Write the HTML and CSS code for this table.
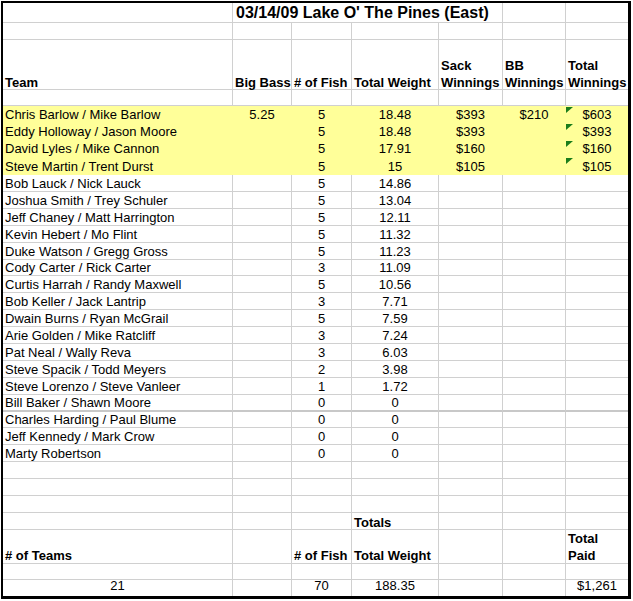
FILE: index.html
```html
<!DOCTYPE html>
<html>
<head>
<meta charset="utf-8">
<link rel="stylesheet" href="styles.css">
</head>
<body>
<div class="sheet">
  <div class="row">
    <div class="c"></div>
    <div class="c title">03/14/09 Lake O' The Pines (East)</div>
    <div class="c"></div>
    <div class="c g"></div>
  </div>
  <div class="row">
    <div class="c"></div><div class="c"></div><div class="c"></div><div class="c"></div><div class="c"></div><div class="c"></div><div class="c g"></div>
  </div>
  <div class="row hrow">
    <div class="c h"><span class="t">Team</span></div>
    <div class="c h"><span class="t">Big Bass</span></div>
    <div class="c h"><span class="t">#&nbsp;of Fish</span></div>
    <div class="c h"><span class="t">Total Weight</span></div>
    <div class="c h"><span class="t">Sack<br>Winnings</span></div>
    <div class="c h"><span class="t">BB<br>Winnings</span></div>
    <div class="c h g"><span class="t">Total<br>Winnings</span></div>
  </div>
  <div class="row">
    <div class="c"></div><div class="c"></div><div class="c"></div><div class="c"></div><div class="c"></div><div class="c"></div><div class="c g"></div>
  </div>

  <div class="row y">
    <div class="c">Chris Barlow / Mike Barlow</div><div class="c m">5.25</div><div class="c m">5</div><div class="c m">18.48</div><div class="c m">$393</div><div class="c m">$210</div><div class="c m g"><span class="tri"></span>$603</div>
  </div>
  <div class="row y">
    <div class="c">Eddy Holloway / Jason Moore</div><div class="c m"></div><div class="c m">5</div><div class="c m">18.48</div><div class="c m">$393</div><div class="c m"></div><div class="c m g"><span class="tri"></span>$393</div>
  </div>
  <div class="row y">
    <div class="c">David Lyles / Mike Cannon</div><div class="c m"></div><div class="c m">5</div><div class="c m">17.91</div><div class="c m">$160</div><div class="c m"></div><div class="c m g"><span class="tri"></span>$160</div>
  </div>
  <div class="row y">
    <div class="c">Steve Martin / Trent Durst</div><div class="c m"></div><div class="c m">5</div><div class="c m">15</div><div class="c m">$105</div><div class="c m"></div><div class="c m g"><span class="tri"></span>$105</div>
  </div>

  <div class="row"><div class="c">Bob Lauck / Nick Lauck</div><div class="c"></div><div class="c m">5</div><div class="c m">14.86</div><div class="c"></div><div class="c"></div><div class="c g"></div></div>
  <div class="row"><div class="c">Joshua Smith / Trey Schuler</div><div class="c"></div><div class="c m">5</div><div class="c m">13.04</div><div class="c"></div><div class="c"></div><div class="c g"></div></div>
  <div class="row"><div class="c">Jeff Chaney / Matt Harrington</div><div class="c"></div><div class="c m">5</div><div class="c m">12.11</div><div class="c"></div><div class="c"></div><div class="c g"></div></div>
  <div class="row"><div class="c">Kevin Hebert / Mo Flint</div><div class="c"></div><div class="c m">5</div><div class="c m">11.32</div><div class="c"></div><div class="c"></div><div class="c g"></div></div>
  <div class="row"><div class="c">Duke Watson / Gregg Gross</div><div class="c"></div><div class="c m">5</div><div class="c m">11.23</div><div class="c"></div><div class="c"></div><div class="c g"></div></div>
  <div class="row"><div class="c">Cody Carter / Rick Carter</div><div class="c"></div><div class="c m">3</div><div class="c m">11.09</div><div class="c"></div><div class="c"></div><div class="c g"></div></div>
  <div class="row"><div class="c">Curtis Harrah / Randy Maxwell</div><div class="c"></div><div class="c m">5</div><div class="c m">10.56</div><div class="c"></div><div class="c"></div><div class="c g"></div></div>
  <div class="row"><div class="c">Bob Keller / Jack Lantrip</div><div class="c"></div><div class="c m">3</div><div class="c m">7.71</div><div class="c"></div><div class="c"></div><div class="c g"></div></div>
  <div class="row"><div class="c">Dwain Burns / Ryan McGrail</div><div class="c"></div><div class="c m">5</div><div class="c m">7.59</div><div class="c"></div><div class="c"></div><div class="c g"></div></div>
  <div class="row"><div class="c">Arie Golden / Mike Ratcliff</div><div class="c"></div><div class="c m">3</div><div class="c m">7.24</div><div class="c"></div><div class="c"></div><div class="c g"></div></div>
  <div class="row"><div class="c">Pat Neal / Wally Reva</div><div class="c"></div><div class="c m">3</div><div class="c m">6.03</div><div class="c"></div><div class="c"></div><div class="c g"></div></div>
  <div class="row"><div class="c">Steve Spacik / Todd Meyers</div><div class="c"></div><div class="c m">2</div><div class="c m">3.98</div><div class="c"></div><div class="c"></div><div class="c g"></div></div>
  <div class="row"><div class="c">Steve Lorenzo / Steve Vanleer</div><div class="c"></div><div class="c m">1</div><div class="c m">1.72</div><div class="c"></div><div class="c"></div><div class="c g"></div></div>
  <div class="row thick"><div class="c">Bill Baker / Shawn Moore</div><div class="c"></div><div class="c m">0</div><div class="c m">0</div><div class="c"></div><div class="c"></div><div class="c g"></div></div>
  <div class="row"><div class="c">Charles Harding / Paul Blume</div><div class="c"></div><div class="c m">0</div><div class="c m">0</div><div class="c"></div><div class="c"></div><div class="c g"></div></div>
  <div class="row"><div class="c">Jeff Kennedy / Mark Crow</div><div class="c"></div><div class="c m">0</div><div class="c m">0</div><div class="c"></div><div class="c"></div><div class="c g"></div></div>
  <div class="row"><div class="c">Marty Robertson</div><div class="c"></div><div class="c m">0</div><div class="c m">0</div><div class="c"></div><div class="c"></div><div class="c g"></div></div>

  <div class="row"><div class="c"></div><div class="c"></div><div class="c"></div><div class="c"></div><div class="c"></div><div class="c"></div><div class="c g"></div></div>
  <div class="row"><div class="c"></div><div class="c"></div><div class="c"></div><div class="c"></div><div class="c"></div><div class="c"></div><div class="c g"></div></div>
  <div class="row"><div class="c"></div><div class="c"></div><div class="c"></div><div class="c"></div><div class="c"></div><div class="c"></div><div class="c g"></div></div>
  <div class="row"><div class="c"></div><div class="c"></div><div class="c"></div><div class="c h"><span class="t">Totals</span></div><div class="c"></div><div class="c"></div><div class="c g"></div></div>
  <div class="row hrow2">
    <div class="c h"><span class="t"># of Teams</span></div><div class="c"></div><div class="c h"><span class="t"># of Fish</span></div><div class="c h"><span class="t">Total Weight</span></div><div class="c"></div><div class="c"></div><div class="c h g"><span class="t">Total<br>Paid</span></div>
  </div>
  <div class="row"><div class="c"></div><div class="c"></div><div class="c"></div><div class="c"></div><div class="c"></div><div class="c"></div><div class="c g"></div></div>
  <div class="row last"><div class="c m">21</div><div class="c"></div><div class="c m">70</div><div class="c m">188.35</div><div class="c"></div><div class="c"></div><div class="c m g">$1,261</div></div>
</div>
</body>
</html>
```

FILE: styles.css
```css
html, body {
  margin: 0;
  padding: 0;
  background: #fff;
}

body {
  font-family: "Liberation Sans", Arial, sans-serif;
  font-size: 13px;
  color: #000;
}

.sheet {
  display: grid;
  width: max-content;
  margin: 1px 0 0 1px;
  border-style: solid;
  border-color: #000;
  border-width: 2px 3px 3px 2px;
  grid-template-columns: 230px 59px 60px 87px 64px 63px 62px;
  grid-template-rows:
    20px 17px 50px 16px
    17px 17px 17px 18px
    17px
    17px 17px 17px 17px 16px 17px 17px 17px 17px 17px 17px 17px
    17px 16px 17px 17px
    17px 17px 17px 17px 34px 16px 16px;
}

.row {
  display: contents;
}

.c {
  position: relative;
  box-sizing: border-box;
  display: flex;
  align-items: flex-end;
  padding: 0 2px;
  border-right: 1px solid #d0d0d0;
  border-bottom: 1px solid #d0d0d0;
  line-height: 14px;
  white-space: nowrap;
  min-width: 0;
}

.c.g {
  border-right: none;
}

.title {
  grid-column: span 4;
  font-size: 16px;
  font-weight: bold;
  line-height: 18px;
  padding-left: 3px;
}

.h {
  font-weight: bold;
  line-height: 17px;
}

.h .t {
  display: block;
  margin-bottom: -2px;
}

.hrow2 .h .t {
  margin-bottom: -1px;
}

.m {
  justify-content: center;
}

.y .c {
  background: #ffff99;
  border-color: #ffff99;
}

.thick .c {
  border-bottom: 2px solid #c8c8c8;
}

.last .c {
  border-bottom: none;
  padding-bottom: 3px;
}

.tri {
  position: absolute;
  left: 0;
  top: 1px;
  width: 7px;
  height: 6px;
  background: #1b7d1b;
  clip-path: polygon(0 0, 100% 0, 0 100%);
}
```
